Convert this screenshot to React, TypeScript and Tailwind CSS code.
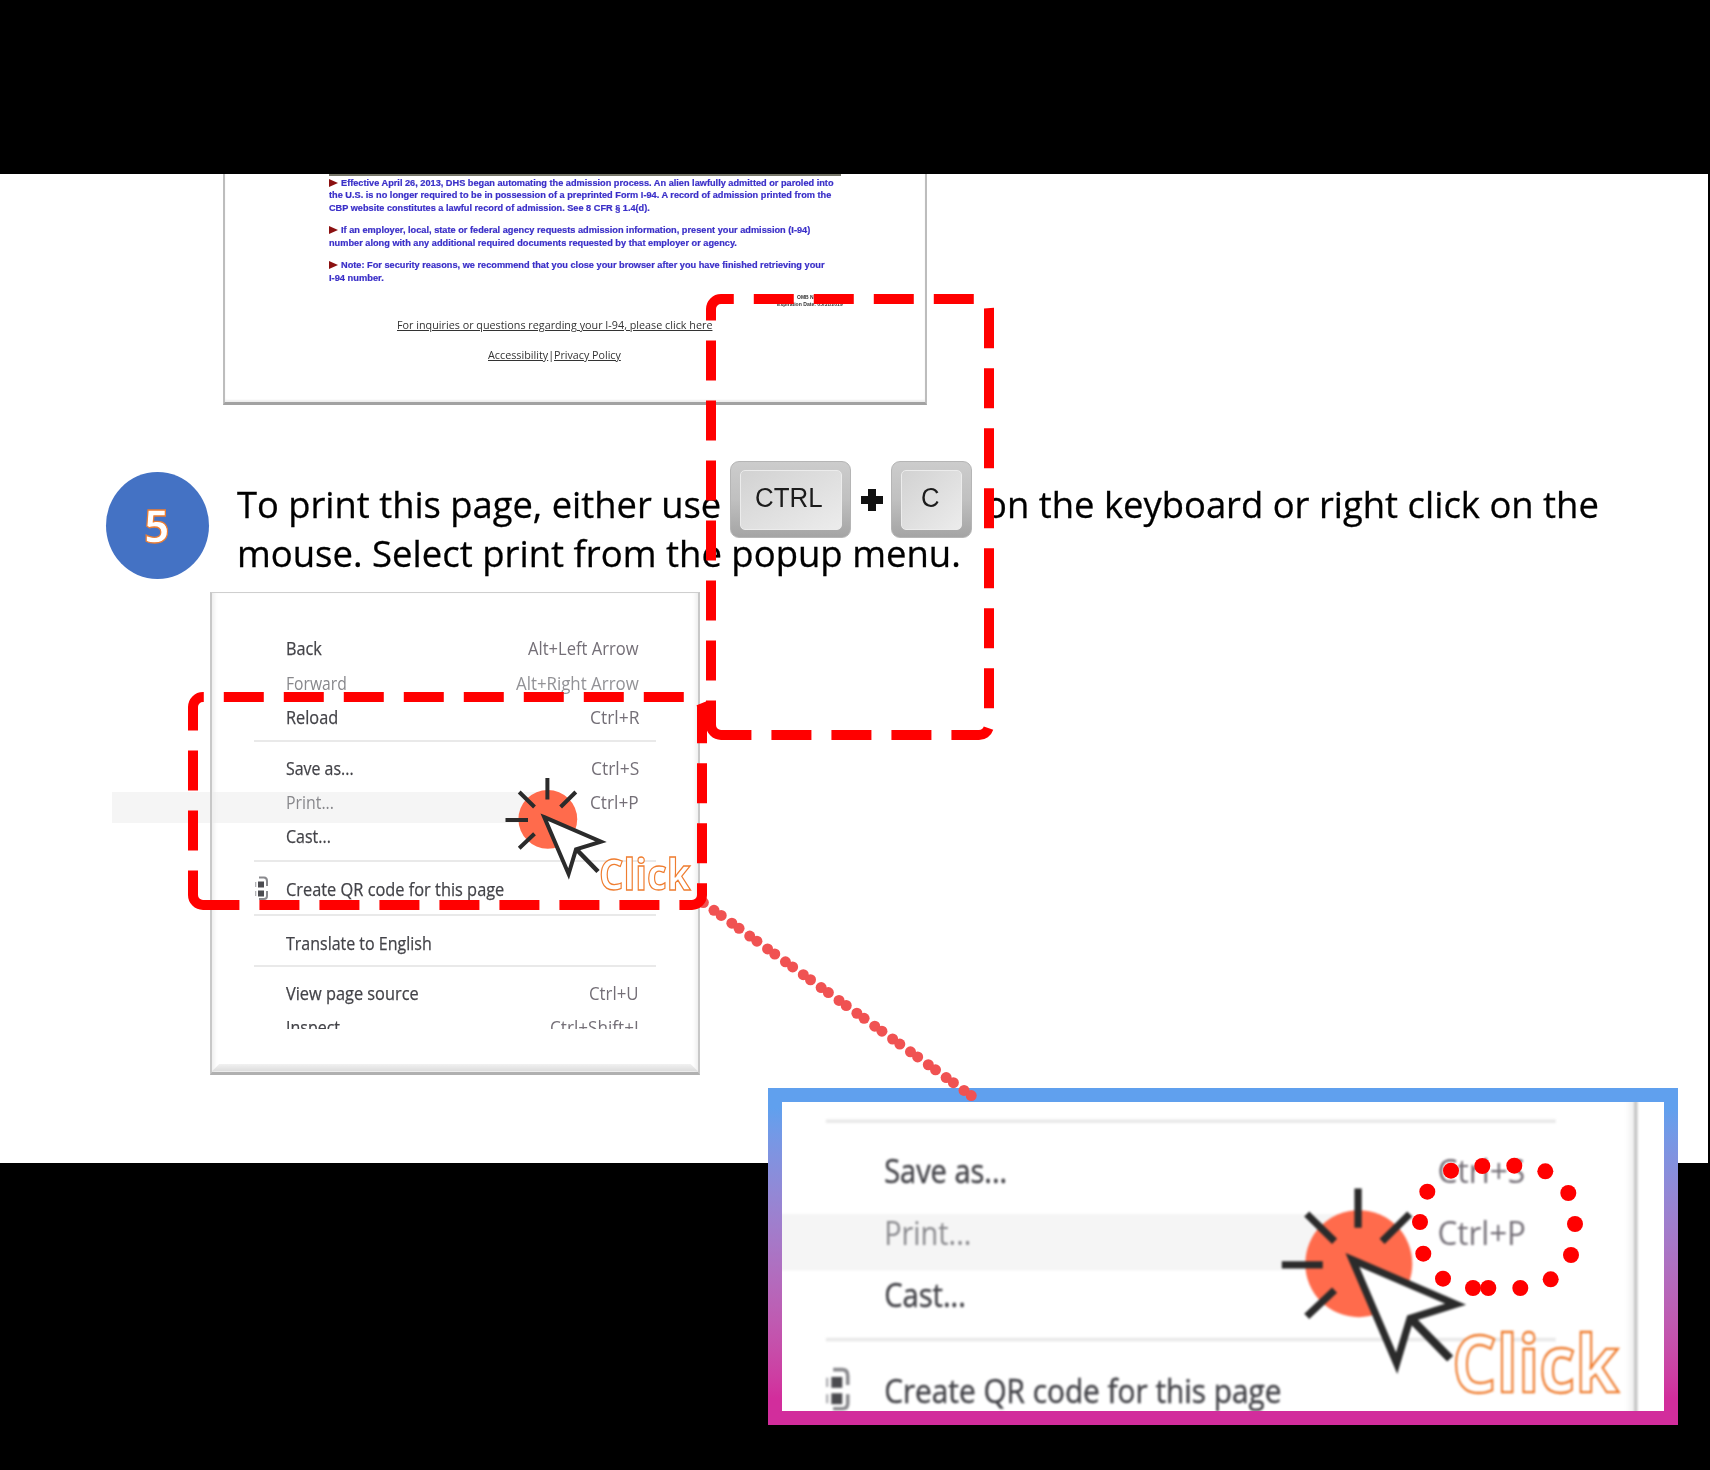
import { useLayoutEffect, useRef, useState } from "react";
import type { ReactNode } from "react";

/** A single line of text, condensed or widened to an exact width. */
function Fit({ w, className = "", inner = "", children }: { w: number; className?: string; inner?: string; children: ReactNode }) {
  const ref = useRef<HTMLSpanElement>(null);
  const [scale, setScale] = useState(1);
  useLayoutEffect(() => {
    if (ref.current) setScale(w / ref.current.offsetWidth);
  }, [w]);
  return (
    <span className={"block shrink-0 whitespace-nowrap " + className} style={{ width: w }}>
      <span ref={ref} className={"inline-block origin-left " + inner} style={{ transform: `scaleX(${scale})` }}>
        {children}
      </span>
    </span>
  );
}

function Marker() {
  return <span className="mt-[2px] mr-[3px] h-0 w-0 shrink-0 border-y-[4px] border-l-[9px] border-y-transparent border-l-[#8b1010]" />;
}

function NoticeCard() {
  return (
    <article className="ml-[222.5px] h-[231px] w-[704px] shrink-0 border-x-2 border-b-[3px] border-x-[#bdbdbd] border-b-[#a2a2a2] bg-white shadow-[inset_0_-2px_2px_#eeeeee]">
      <div className="ml-[104.5px] w-[512px] border-t-2 border-[#77776a] font-['Liberation_Sans',sans-serif] text-[8.8px] leading-[12.8px] font-bold text-[#3a2fc8] blur-[0.35px] [-webkit-text-stroke:0.2px_#3a2fc8]">
        <div className="mt-[0.5px] flex">
          <Marker />
          <Fit w={493}>Effective April 26, 2013, DHS began automating the admission process. An alien lawfully admitted or paroled into</Fit>
        </div>
        <Fit w={502}>the U.S. is no longer required to be in possession of a preprinted Form I-94. A record of admission printed from the</Fit>
        <Fit w={321}>CBP website constitutes a lawful record of admission. See 8 CFR § 1.4(d).</Fit>
        <div className="mt-[9.2px] flex">
          <Marker />
          <Fit w={469}>If an employer, local, state or federal agency requests admission information, present your admission (I-94)</Fit>
        </div>
        <Fit w={408}>number along with any additional required documents requested by that employer or agency.</Fit>
        <div className="mt-[9.2px] flex">
          <Marker />
          <Fit w={483}>Note: For security reasons, we recommend that you close your browser after you have finished retrieving your</Fit>
        </div>
        <Fit w={55}>I-94 number.</Fit>
      </div>
      <div className="mt-[9.5px] ml-[552.5px] flex w-[66px] flex-col items-end font-['Liberation_Sans',sans-serif] text-[5px] leading-[7px] font-bold text-[#333] blur-[0.3px]">
        <Fit w={46}>OMB No. 1651-0111</Fit>
        <Fit w={66}>Expiration Date: 05/31/2019</Fit>
      </div>
      <div className="mt-[9px] ml-[172.5px] font-['Open_Sans',sans-serif] text-[11.5px] leading-[16px] text-[#333333] blur-[0.3px]">
        <Fit w={315} inner="underline">For inquiries or questions regarding your I-94, please click here</Fit>
        <div className="mt-[14px] ml-[91px] flex">
          <Fit w={60} inner="underline">Accessibility</Fit>
          <span className="w-[6px] text-center">|</span>
          <Fit w={67} inner="underline">Privacy Policy</Fit>
        </div>
      </div>
    </article>
  );
}

function Key({ label, w, text, className }: { label: string; w: number; text: string; className: string }) {
  return (
    <span
      className={"flex h-[77px] shrink-0 rounded-[9px] border border-[#b5b5b5] bg-linear-to-b from-[#cccccc] via-[#c0c0c0] to-[#a4a4a4] pt-[8px] " + className}
    >
      <span className={"flex h-[60px] items-center rounded-[5px] border border-[#ececec] bg-linear-to-br from-[#d2d2d2] to-[#ececec] pb-[3px] font-['Liberation_Sans',sans-serif] text-[27px] leading-none text-[#1c1c1c] " + text}>
        <Fit w={w}>{label}</Fit>
      </span>
    </span>
  );
}

function Step() {
  return (
    <div className="mt-[56px] ml-[105.5px] flex h-[131px] shrink-0">
      <div className="mt-[10.5px] flex h-[107.5px] w-[103px] shrink-0 items-center justify-center rounded-[50%] bg-[#4472c4] pr-px font-['Open_Sans',sans-serif] text-[46.5px] leading-none font-bold text-white [-webkit-text-stroke:1.3px_#ed7d31]">
        <Fit w={26}>5</Fit>
      </div>
      <div className="ml-[28px] font-['Open_Sans',sans-serif] text-[37px] leading-[49.3px] text-black [-webkit-text-stroke:0.3px_#000]">
        <div className="flex h-[67.4px]">
          <Fit w={484} className="mt-[18.4px]">To print this page, either use</Fit>
          <Key label="CTRL" w={68} className="ml-[9px] w-[121px] pl-[9px] [-webkit-text-stroke:0]" text="w-[102px] pl-[14px]" />
          <span className="relative mt-[28px] ml-[10px] h-[22px] w-[22px] shrink-0">
            <span className="absolute top-0 left-[7px] h-full w-[8px] bg-[#111]" />
            <span className="absolute top-[7px] left-0 h-[8px] w-full bg-[#111]" />
          </span>
          <Key label="C" w={19} className="ml-[8px] w-[81px] pl-[9px] [-webkit-text-stroke:0]" text="w-[61px] pl-[19px]" />
          <Fit w={614} className="mt-[18.4px] ml-[13px]">on the keyboard or right click on the</Fit>
        </div>
        <Fit w={724}>mouse. Select print from the popup menu.</Fit>
      </div>
    </div>
  );
}

function Row({ label, w, keys, kw, dim = false }: { label: string; w: number; keys?: string; kw?: number; dim?: boolean }) {
  return (
    <div className={"relative flex h-[34.3px] shrink-0 justify-between pr-[17px] pl-[32px] " + (dim ? "text-[#88888c]" : "text-[#434348] [-webkit-text-stroke:0.25px_#434348]")}>
      <Fit w={w}>{label}</Fit>
      {keys && kw && (
        <Fit w={kw} className={"[-webkit-text-stroke:0] " + (dim && label === "Forward" ? "text-[#929296]" : "text-[#746f77]")}>
          {keys}
        </Fit>
      )}
    </div>
  );
}

function Rule({ className }: { className: string }) {
  return (
    <div className={"relative shrink-0 " + className}>
      <div className="h-[2px] bg-[#e9e9e9]" />
    </div>
  );
}

function ClickArt() {
  return (
    <svg className="absolute top-[180px] left-[290.3px] h-[115px] w-[112px]" viewBox="500 772 112 115" fill="none">
      <circle cx="547.8" cy="819.3" r="29.4" fill="#ff6b4c" />
      <g stroke="#2b2b2b" strokeWidth="4">
        <path d="M547.4 778V799.5M519.2 792L534.5 807M575.8 792L560.6 807M505.5 820H528M519.2 848.3L534.5 833.8" />
        <path d="M577 850L598 871.5" strokeWidth="4.6" />
        <path d="M544.3 817.2L601 841.6L576 849.4L568.6 874Z" fill="#ffffff" />
      </g>
    </svg>
  );
}

function QrIcon() {
  return (
    <svg className="absolute top-[3.5px] left-[0.5px] h-[25px] w-[14px]" viewBox="0 0 14 25" fill="none">
      <path d="M4 1.5H9Q12 1.5 12 5V10M12 15V20Q12 23 9 23H4" stroke="#8a8a8e" strokeWidth="2" />
      <rect x="3" y="5.5" width="6" height="6" fill="#4c4c50" />
      <rect x="3" y="14.5" width="6" height="6" fill="#4c4c50" />
      <path d="M.7 6V11M.7 15V20" stroke="#aaaaae" strokeWidth="1.2" />
    </svg>
  );
}

/** The browser's context menu with the click pointer over it. */
function ContextMenu({ soft }: { soft: string }) {
  return (
    <div className={"relative h-[482.5px] w-[490.5px] shrink-0 " + soft}>
      <div className="absolute top-[199.5px] left-[-98px] h-[31.5px] w-[430px] bg-[#f5f5f5]" />
      <div className="relative flex h-full flex-col border-x-[2.5px] border-t-[1.5px] border-b-[3px] border-x-[#c8c8c8] border-t-[#cfcfcf] border-b-[#b0b0b0] pt-[38.4px] pr-[42.5px] pl-[42.5px] font-['Open_Sans',sans-serif] text-[18.5px] leading-[34.3px] shadow-[inset_5px_0_4px_-3px_#ececec,inset_-5px_0_4px_-3px_#ececec]">
        <Row label="Back" w={36} keys="Alt+Left Arrow" kw={111} />
        <Row label="Forward" w={61} keys="Alt+Right Arrow" kw={123} dim />
        <Row label="Reload" w={52} keys="Ctrl+R" kw={49} />
        <Rule className="h-[16.4px] pt-[5.3px]" />
        <Row label="Save as..." w={68} keys="Ctrl+S" kw={48} />
        <Row label="Print..." w={48} keys="Ctrl+P" kw={48.5} dim />
        <Row label="Cast..." w={45} />
        <Rule className="h-[18.8px] pt-[6.3px]" />
        <div className="relative shrink-0">
          <QrIcon />
          <Row label="Create QR code for this page" w={218.5} />
        </div>
        <Rule className="h-[19px] pt-[7px]" />
        <Row label="Translate to English" w={146} />
        <Rule className="h-[16.2px] pt-[5px]" />
        <Row label="View page source" w={132.5} keys="Ctrl+U" kw={50} />
        <div className="h-[18.6px] shrink-0 overflow-hidden">
          <Row label="Inspect" w={54.5} keys="Ctrl+Shift+I" kw={89} />
        </div>
        <div className="absolute inset-x-0 bottom-0 h-[8px] bg-linear-to-b from-[#f1f1f1] to-[#dadada] [clip-path:polygon(8px_0,calc(100%-8px)_0,100%_100%,0_100%)]" />
      </div>
      <ClickArt />
      <div className="absolute top-[260px] left-[389px] font-['Open_Sans',sans-serif] text-[43.5px] leading-[44px] font-bold text-white [-webkit-text-stroke:1.3px_#ef7d30]">
        <Fit w={92}>Click</Fit>
      </div>
    </div>
  );
}

const connector = Array.from({ length: 31 }, (_, i) => {
  const pair = Math.floor((i + 1) / 2) - 1;
  const second = (i + 1) % 2;
  return { x: 714 + 17.86 * pair + 7.2 * second, y: 910.3 + 12.87 * pair + 5.1 * second };
});

const ring = [
  [1451, 1170.7], [1482.3, 1166], [1514.3, 1165.7], [1545.3, 1171.3], [1568.3, 1193],
  [1575, 1224], [1571, 1255], [1550.7, 1279.3], [1520.3, 1288], [1488.3, 1288],
  [1473, 1288], [1443, 1278.7], [1423.3, 1253.7], [1420, 1222], [1427.3, 1191.7],
];

function Annotations() {
  return (
    <svg className="pointer-events-none absolute inset-0 h-[1470px] w-[1710px]" viewBox="0 0 1710 1470" fill="none">
      {connector.map((p, i) => (
        <circle key={i} cx={p.x} cy={p.y} r="5.5" fill="#f05252" />
      ))}
      <g stroke="#ff0000" strokeWidth="10" strokeDasharray="40 20">
        <path d="M721 735A10 10 0 0 1 711 725V309A10 10 0 0 1 721 299H979A10 10 0 0 1 989 309V725A10 10 0 0 1 979 735Z" />
        <path d="M203 905A10 10 0 0 1 193 895V707A10 10 0 0 1 203 697H692A10 10 0 0 1 702 707V895A10 10 0 0 1 692 905Z" />
      </g>
      {ring.map(([x, y], i) => (
        <circle key={i} cx={x} cy={y} r="8" fill="#ff0000" />
      ))}
    </svg>
  );
}

export default function App() {
  return (
    <main className="relative h-[1470px] w-[1710px] overflow-hidden bg-black pt-[174px]">
      <section className="flex h-[989px] w-[1708px] flex-col bg-white">
        <NoticeCard />
        <Step />
        <div className="ml-[209.7px]">
          <ContextMenu soft="blur-[0.5px]" />
        </div>
      </section>
      <aside className="absolute top-[1088px] left-[768px] h-[337px] w-[910px] bg-linear-to-b from-[#60a0ee] from-6% to-[#d22d9c] to-92% p-[14px]">
        <div className="relative h-[309px] w-[882px] overflow-hidden bg-white">
          <div className="absolute top-[-252.3px] left-[-38px] origin-top-left scale-[1.82]">
            <ContextMenu soft="blur-[0.6px]" />
          </div>
        </div>
      </aside>
      <Annotations />
    </main>
  );
}
